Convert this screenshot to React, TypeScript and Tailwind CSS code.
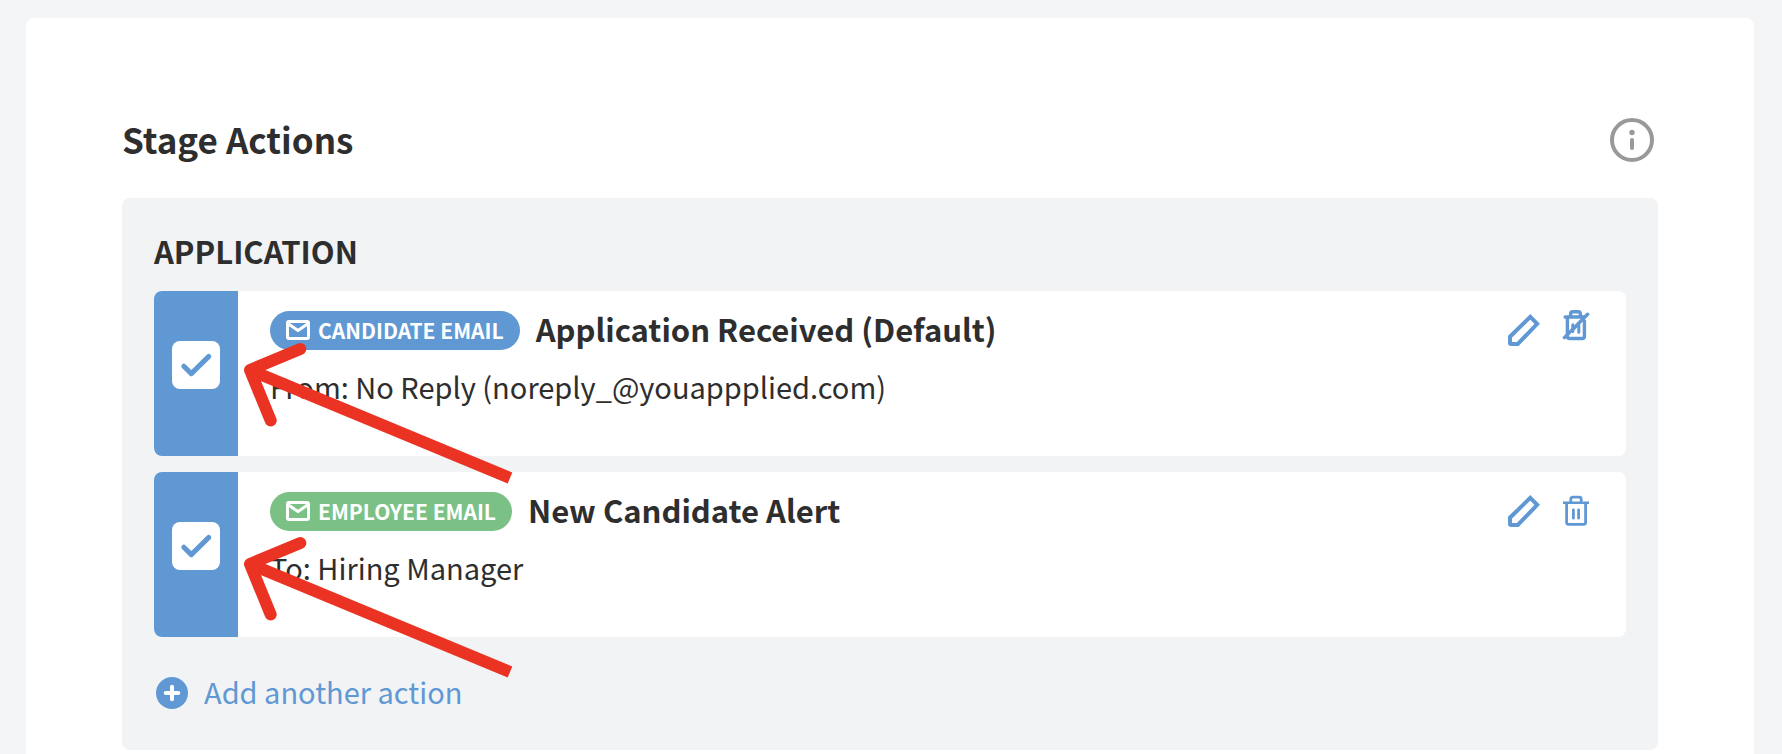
import { useId, useState } from 'react';

interface StageAction {
  id: string;
  badge: string;
  badgeStyle: string;
  title: string;
  detail: string;
  removable: boolean;
}

const actions: StageAction[] = [
  {
    id: 'application-received',
    badge: 'CANDIDATE EMAIL',
    badgeStyle: 'bg-[#6098d4]',
    title: 'Application Received (Default)',
    detail: 'From: No Reply (noreply_@youappplied.com)',
    removable: false,
  },
  {
    id: 'new-candidate-alert',
    badge: 'EMPLOYEE EMAIL',
    badgeStyle: 'bg-[#7bc185]',
    title: 'New Candidate Alert',
    detail: 'To: Hiring Manager',
    removable: true,
  },
];

function InfoIcon() {
  return (
    <svg viewBox="0 0 44 44" className="size-11" fill="none" aria-hidden="true">
      <circle cx="22" cy="22" r="20" stroke="currentColor" strokeWidth="4" />
      <circle cx="22" cy="14.5" r="2.7" fill="currentColor" />
      <path d="M22 22v8" stroke="currentColor" strokeWidth="4" strokeLinecap="round" />
    </svg>
  );
}

function MailIcon() {
  return (
    <svg viewBox="0 0 24 20" className="h-5 w-6" fill="none" stroke="currentColor" strokeWidth="3" strokeLinejoin="round" aria-hidden="true">
      <rect x="1.5" y="1.5" width="21" height="17" rx="1.5" />
      <path d="M2.5 4l9.5 6.6L21.5 4" />
    </svg>
  );
}

function PencilIcon() {
  return (
    <svg viewBox="0 0 32 32" className="size-8" fill="none" stroke="currentColor" strokeWidth="4" aria-hidden="true">
      <path d="M22.3 2.8 29.2 9.8 9.8 30H3.2Q2 30 2 28.8V22.7Z" />
    </svg>
  );
}

function TrashIcon() {
  return (
    <svg viewBox="0 0 28 32" className="h-8 w-7" fill="none" stroke="currentColor" strokeWidth="2.8" strokeLinecap="round" aria-hidden="true">
      <path d="M1 7.8h26" strokeLinecap="butt" strokeWidth="2.6" />
      <path d="M8.8 7V4.2q0-2 2-2h6.4q2 0 2 2V7" />
      <path d="M4.6 8.4v18.8q0 2.2 2.2 2.2h14.6q2.2 0 2.2-2.2V8.4" />
      <path d="M11.4 14.8v8.4M16.6 14.8v8.4" />
    </svg>
  );
}

function TrashOffIcon() {
  return (
    <svg viewBox="0 0 28 32" className="h-8 w-7" fill="none" stroke="currentColor" strokeWidth="3.4" strokeLinecap="round" strokeLinejoin="round" aria-hidden="true">
      <path d="M3.2 8H22" />
      <path d="M8.6 7V4.9q0-2.2 2.2-2.2h5.4q2.2 0 2.2 2.2V7" />
      <path d="M5.4 9v18.2q0 2.3 2.3 2.3h12.4q2.3 0 2.3-2.3V12" />
      <path d="M10.8 16v6.4M16.8 14.4v8.8" strokeWidth="3" />
      <path d="M10.8 15v7L16.8 15" strokeWidth="1.6" />
      <path d="M2.4 28.6 25.6 5.2" />
    </svg>
  );
}

function PlusIcon() {
  return (
    <svg viewBox="0 0 32 32" className="size-8" fill="none" aria-hidden="true">
      <circle cx="16" cy="16" r="16" fill="currentColor" />
      <path d="M16 9.7v12.6M9.7 16h12.6" stroke="#fff" strokeWidth="4" strokeLinecap="round" />
    </svg>
  );
}

function Arrow() {
  return (
    <svg viewBox="0 0 280 150" className="h-[150px] w-[280px]" fill="none" stroke="#ea3323" strokeWidth="12" aria-hidden="true">
      <path d="M10 28 270 136" />
      <path d="M60.3 7 10 28 30.7 78.5" strokeLinecap="round" strokeLinejoin="round" />
    </svg>
  );
}

function ActionRow({ action }: { action: StageAction }) {
  const [enabled, setEnabled] = useState(true);
  const checkboxId = useId();

  return (
    <li className="flex min-h-[165px] overflow-hidden rounded-lg bg-white">
      <div className="flex w-[84px] shrink-0 justify-center bg-[#6098d4] pt-[50px]">
        <div className="relative size-12">
          <input
            id={checkboxId}
            type="checkbox"
            checked={enabled}
            onChange={(e) => setEnabled(e.target.checked)}
            className="block size-12 cursor-pointer appearance-none rounded-lg bg-white"
          />
          {enabled && (
            <svg viewBox="0 0 48 48" className="pointer-events-none absolute inset-0 text-[#6098d4]" fill="none" aria-hidden="true">
              <path d="M11.8 25.2l7.5 7.4L36.8 15.4" stroke="currentColor" strokeWidth="5" strokeLinecap="round" strokeLinejoin="round" />
            </svg>
          )}
        </div>
      </div>

      <div className="min-w-0 flex-1 px-8 pt-5">
        <div className="flex items-start gap-4">
          <span className={`${action.badgeStyle} flex h-[39px] items-center gap-2 rounded-full px-4 pb-px text-[21px] leading-8 font-bold text-white`}>
            <MailIcon />
            {action.badge}
          </span>
          <label htmlFor={checkboxId} className="text-[31px] leading-9 font-bold">
            {action.title}
          </label>
        </div>
        <p className="mt-4 text-[29px] leading-10">{action.detail}</p>
      </div>

      <div className="flex h-[78px] gap-[22px] pr-9 text-[#6098d4]">
        <button type="button" aria-label={`Edit ${action.title}`} className="cursor-pointer">
          <PencilIcon />
        </button>
        {action.removable ? (
          <button type="button" aria-label={`Delete ${action.title}`} className="cursor-pointer">
            <TrashIcon />
          </button>
        ) : (
          <button type="button" aria-label={`${action.title} cannot be deleted`} disabled className="pb-2.5">
            <TrashOffIcon />
          </button>
        )}
      </div>
    </li>
  );
}

export default function App() {
  return (
    <div className="flex min-h-screen flex-col bg-[#f4f5f7] pt-[18px] pr-7 pl-[26px] font-['Noto_Sans_CJK_SC','Noto_Sans',sans-serif] text-[#2e2e2e]">
      <main className="flex-1 rounded-t-lg bg-white px-24 pt-[100px] pb-1">
        <header className="flex items-start justify-between pr-1">
          <h1 className="text-[35px] leading-[42px] font-bold">Stage Actions</h1>
          <button type="button" aria-label="About stage actions" className="cursor-pointer text-[#999]">
            <InfoIcon />
          </button>
        </header>

        <section className="mt-9 rounded-lg bg-[#f1f3f5] px-8 pt-8 pb-[35px]">
          <h2 className="text-[31px] leading-[42px] font-bold">APPLICATION</h2>

          <div className="relative mt-[19px]">
            <ul className="flex flex-col gap-4">
              {actions.map((action) => (
                <ActionRow key={action.id} action={action} />
              ))}
            </ul>

            {/* Callouts that point at the row checkboxes */}
            <div className="pointer-events-none absolute top-[51px] left-[86px] flex flex-col gap-11">
              <Arrow />
              <Arrow />
            </div>
          </div>

          <button type="button" className="mt-[34px] ml-0.5 flex cursor-pointer items-center gap-4 text-[29px] leading-10 text-[#6098d4]">
            <PlusIcon />
            <span className="pb-1">Add another action</span>
          </button>
        </section>
      </main>
    </div>
  );
}
